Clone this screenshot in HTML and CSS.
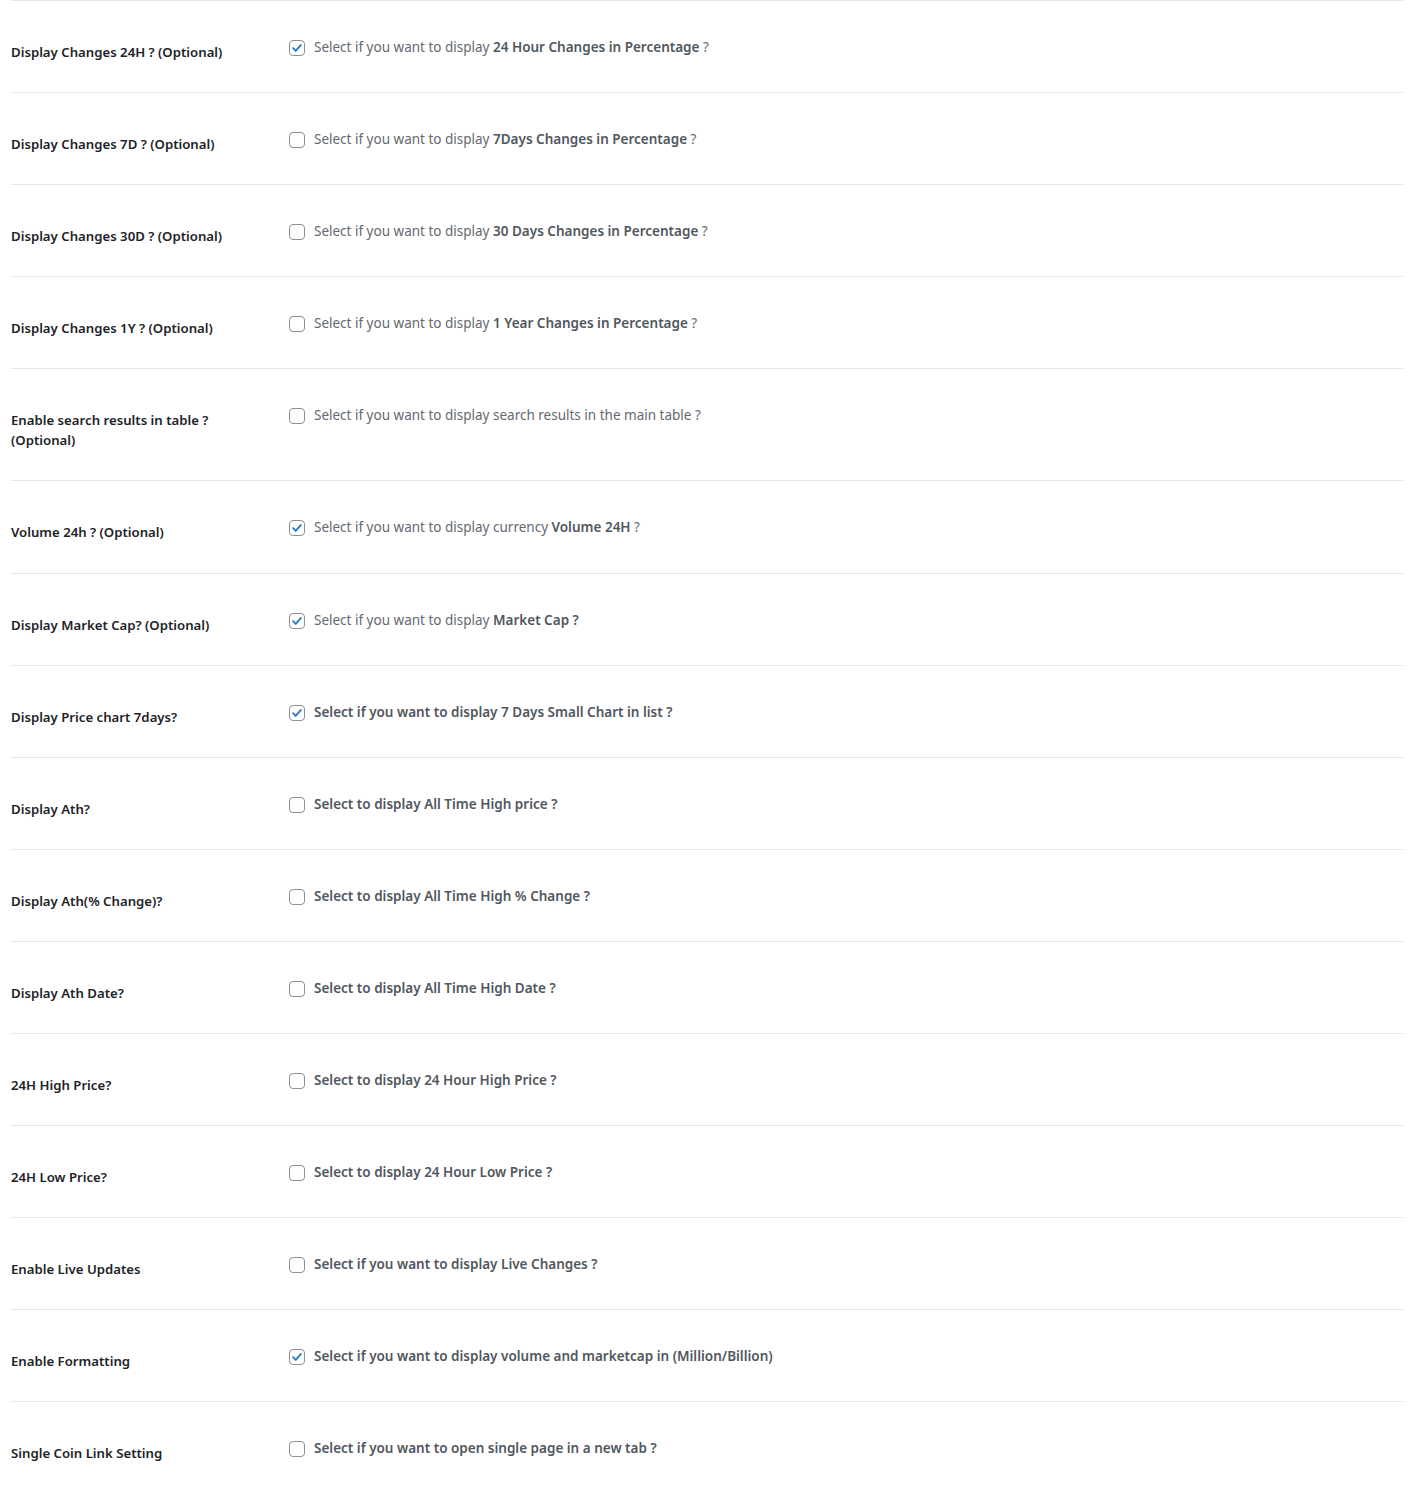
FILE: index.html
```html
<!DOCTYPE html>
<html>
<head>
<meta charset="utf-8">
<link rel="stylesheet" href="styles.css">
</head>
<body>
<div class="form">
  <div class="row">
    <div class="label">Display Changes 24H ? (Optional)</div>
    <div class="field"><span class="cb on"><svg viewBox="0 0 16 16"><path d="M3.6 8.2l2.9 3.1 5.8-6.7"/></svg></span><span class="desc">Select if you want to display <b>24 Hour Changes in Percentage</b> ?</span></div>
  </div>
  <div class="row">
    <div class="label">Display Changes 7D ? (Optional)</div>
    <div class="field"><span class="cb"></span><span class="desc">Select if you want to display <b>7Days Changes in Percentage</b> ?</span></div>
  </div>
  <div class="row">
    <div class="label">Display Changes 30D ? (Optional)</div>
    <div class="field"><span class="cb"></span><span class="desc">Select if you want to display <b>30 Days Changes in Percentage</b> ?</span></div>
  </div>
  <div class="row">
    <div class="label">Display Changes 1Y ? (Optional)</div>
    <div class="field"><span class="cb"></span><span class="desc">Select if you want to display <b>1 Year Changes in Percentage</b> ?</span></div>
  </div>
  <div class="row">
    <div class="label">Enable search results in table ?<br>(Optional)</div>
    <div class="field"><span class="cb"></span><span class="desc">Select if you want to display search results in the main table ?</span></div>
  </div>
  <div class="row">
    <div class="label">Volume 24h ? (Optional)</div>
    <div class="field"><span class="cb on"><svg viewBox="0 0 16 16"><path d="M3.6 8.2l2.9 3.1 5.8-6.7"/></svg></span><span class="desc">Select if you want to display currency <b>Volume 24H</b> ?</span></div>
  </div>
  <div class="row">
    <div class="label">Display Market Cap? (Optional)</div>
    <div class="field"><span class="cb on"><svg viewBox="0 0 16 16"><path d="M3.6 8.2l2.9 3.1 5.8-6.7"/></svg></span><span class="desc">Select if you want to display <b>Market Cap ?</b></span></div>
  </div>
  <div class="row">
    <div class="label">Display Price chart 7days?</div>
    <div class="field"><span class="cb on"><svg viewBox="0 0 16 16"><path d="M3.6 8.2l2.9 3.1 5.8-6.7"/></svg></span><span class="desc strong">Select if you want to display 7 Days Small Chart in list ?</span></div>
  </div>
  <div class="row">
    <div class="label">Display Ath?</div>
    <div class="field"><span class="cb"></span><span class="desc strong">Select to display All Time High price ?</span></div>
  </div>
  <div class="row">
    <div class="label">Display Ath(% Change)?</div>
    <div class="field"><span class="cb"></span><span class="desc strong">Select to display All Time High % Change ?</span></div>
  </div>
  <div class="row">
    <div class="label">Display Ath Date?</div>
    <div class="field"><span class="cb"></span><span class="desc strong">Select to display All Time High Date ?</span></div>
  </div>
  <div class="row">
    <div class="label">24H High Price?</div>
    <div class="field"><span class="cb"></span><span class="desc strong">Select to display 24 Hour High Price ?</span></div>
  </div>
  <div class="row">
    <div class="label">24H Low Price?</div>
    <div class="field"><span class="cb"></span><span class="desc strong">Select to display 24 Hour Low Price ?</span></div>
  </div>
  <div class="row">
    <div class="label">Enable Live Updates</div>
    <div class="field"><span class="cb"></span><span class="desc strong">Select if you want to display Live Changes ?</span></div>
  </div>
  <div class="row">
    <div class="label">Enable Formatting</div>
    <div class="field"><span class="cb on"><svg viewBox="0 0 16 16"><path d="M3.6 8.2l2.9 3.1 5.8-6.7"/></svg></span><span class="desc strong">Select if you want to display volume and marketcap in (Million/Billion)</span></div>
  </div>
  <div class="row">
    <div class="label">Single Coin Link Setting</div>
    <div class="field"><span class="cb"></span><span class="desc strong">Select if you want to open single page in a new tab ?</span></div>
  </div>
</div>
</body>
</html>
```
FILE: styles.css
```css
html, body {
  margin: 0;
  padding: 0;
  background: #ffffff;
}
body {
  font-family: "Noto Sans", "Open Sans", sans-serif;
  font-size: 13px;
  color: #1d2327;
}
.form {
  width: 1392px;
  margin-left: 11px;
}
.row {
  display: grid;
  grid-template-columns: 278px 1fr;
  border-top: 1px solid #e6e6e6;
}
.label {
  padding: 41px 0 30.1px 0;
  line-height: 20px;
  font-size: 13.2px;
  font-weight: 600;
  color: #1d2327;
}
.field {
  padding-top: 36px;
  display: flex;
  align-items: flex-start;
  gap: 9px;
  line-height: 20px;
}
.cb {
  box-sizing: border-box;
  flex: none;
  width: 16px;
  height: 16px;
  margin-top: 3px;
  border: 1px solid #8c8f94;
  border-radius: 4px;
  background: #fff;
  display: flex;
  align-items: center;
  justify-content: center;
}
.cb svg {
  width: 14px;
  height: 14px;
}
.cb svg path {
  fill: none;
  stroke: #2c7bc8;
  stroke-width: 2.2;
  stroke-linecap: round;
  stroke-linejoin: round;
}
.desc {
  font-size: 13.5px;
  color: #646970;
}
.desc b, .desc.strong {
  font-weight: 600;
  color: #50575e;
}
```
